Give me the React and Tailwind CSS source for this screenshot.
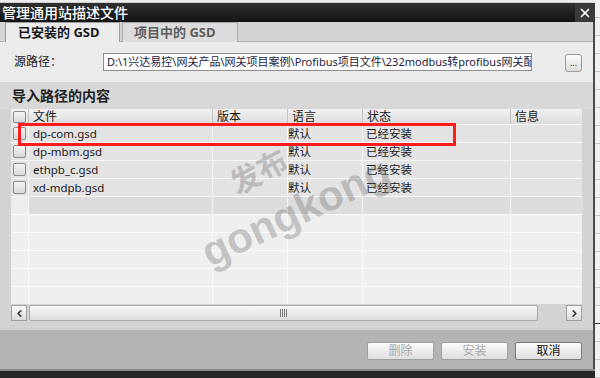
import React from "react";
import { ChevronLeft, ChevronRight, X } from "lucide-react";

const rows = [
  ["dp-com.gsd", "默认", "已经安装"],
  ["dp-mbm.gsd", "默认", "已经安装"],
  ["ethpb_c.gsd", "默认", "已经安装"],
  ["xd-mdpb.gsd", "默认", "已经安装"],
];

function Check() {
  return (
    <div className="w-[13px] h-[13px] rounded-[2px] border border-[#8c8c8c] bg-gradient-to-b from-[#f4f4f4] to-[#d8d8d8]" />
  );
}

function Btn({ children, disabled }) {
  return (
    <div
      className={
        "w-[67px] h-[18px] flex items-center justify-center rounded-[2px] border bg-gradient-to-b from-[#fbfbfb] to-[#dedede] text-[12px] leading-none " +
        (disabled ? "border-[#a0a0a0] text-[#a9a9a9]" : "border-[#7c7c7c] text-[#111]")
      }
    >
      {children}
    </div>
  );
}

export default function App() {
  const emptyRows = [0, 1, 2, 3, 4];
  return (
    <div className="relative w-[600px] h-[378px] overflow-hidden flex bg-[#ececec] font-['Noto_Sans','Noto_Sans_CJK_SC',sans-serif] text-[#1a1a1a]">
      {/* dialog */}
      <div className="w-[595px] flex flex-col shrink-0">
        <div className="h-[3px] shrink-0 bg-[#eeeeee] border-b border-[#cfcfcf]" />
        {/* title bar */}
        <div className="h-[19px] shrink-0 flex items-center justify-between bg-gradient-to-b from-[#303030] to-[#141414]">
          <span className="pl-[2px] text-white text-[14px] leading-none font-medium">管理通用站描述文件</span>
          <div className="w-[20px] h-[19px] flex items-center justify-center bg-[#3a3a3a]">
            <X size={14} strokeWidth={3} color="#ffffff" />
          </div>
        </div>
        {/* body with right border */}
        <div className="flex-1 flex flex-col border-r-2 border-[#4a4a4a]">
          {/* tabs */}
          <div className="h-[20px] shrink-0 flex bg-[#d4d4d4] pl-[5px] border-b border-[#b4b4b4]">
            <div className="w-[115px] h-[20px] flex items-center pl-[12px] bg-[#ececec] border border-b-0 border-[#9c9c9c] text-[13px] font-bold leading-none text-[#1a1a1a]">
              已安装的 GSD
            </div>
            <div className="ml-[2px] w-[116px] h-[20px] flex items-center pl-[11px] bg-[#dcdcdc] border border-b-0 border-[#a8a8a8] text-[13px] font-bold leading-none text-[#5c5c5c]">
              项目中的 GSD
            </div>
          </div>
          {/* path row */}
          <div className="h-[40px] shrink-0 bg-[#ebebeb] flex items-start pt-[11px]">
            <span className="w-[103px] pl-[14px] pt-[1px] text-[12px] leading-[16px] text-[#222]">源路径：</span>
            <div className="w-[429px] h-[18px] bg-white border border-[#8f8f8f] overflow-hidden whitespace-nowrap pl-[3px] text-[11px] leading-[16px] text-[#1c1c40]">
              D:\1兴达易控\网关产品\网关项目案例\Profibus项目文件\232modbus转profibus网关配置
            </div>
            <div className="ml-[33px] mt-[1px] w-[17px] h-[18px] rounded-[3px] border border-[#9a9a9a] bg-gradient-to-b from-[#fbfbfb] to-[#dcdcdc] flex items-end justify-center pb-[4px] text-[9px] leading-none text-[#333]">
              ...
            </div>
          </div>
          {/* section */}
          <div className="flex-1 flex flex-col bg-[#d3d3d3]">
            <div className="h-[27px] shrink-0 flex items-center pl-[12px] pt-[1px] bg-[#d8d8d8] text-[14px] font-bold leading-none text-[#222]">
              导入路径的内容
            </div>
            {/* table */}
            <div className="relative mx-[11px] h-[195px] shrink-0 bg-[#efefef] flex flex-col">
              <div className="h-[15px] shrink-0 grid grid-cols-[18px_184px_75px_75px_148px_72px] bg-gradient-to-b from-[#f2f2f2] to-[#dcdcdc] text-[12px] leading-none">
                <div className="flex items-center pl-[2px] border-r border-[#c4c4c4]">
                  <div className="w-[13px] h-[12px] rounded-[2px] border border-[#8c8c8c] bg-gradient-to-b from-[#f4f4f4] to-[#d8d8d8]" />
                </div>
                <div className="flex items-center pl-[4px] border-r border-[#c4c4c4]">文件</div>
                <div className="flex items-center pl-[4px] border-r border-[#c4c4c4]">版本</div>
                <div className="flex items-center pl-[4px] border-r border-[#c4c4c4]">语言</div>
                <div className="flex items-center pl-[4px] border-r border-[#c4c4c4]">状态</div>
                <div className="flex items-center pl-[4px]">信息</div>
              </div>
              {rows.map((r, i) => (
                <div
                  key={i}
                  className="h-[18px] shrink-0 grid grid-cols-[18px_184px_75px_75px_148px_72px] bg-[#e3e3e3] border-t border-[#f7f7f7] text-[11.5px] leading-none"
                >
                  <div className="flex items-center pl-[2px] border-r border-[#f7f7f7]">
                    <Check />
                  </div>
                  <div className="flex items-center pl-[4px] border-r border-[#f7f7f7]">{r[0]}</div>
                  <div className="border-r border-[#f7f7f7]" />
                  <div className="flex items-center pl-[0px] border-r border-[#f7f7f7]">{r[1]}</div>
                  <div className="flex items-center pl-[3px] border-r border-[#f7f7f7]">{r[2]}</div>
                  <div />
                </div>
              ))}
              <div className="h-[18px] shrink-0 grid grid-cols-[18px_184px_75px_75px_148px_72px] border-t border-[#f7f7f7]">
                <div className="bg-[#ededed] border-r border-[#f7f7f7]" />
                <div className="bg-[#dcdcdc] border-r border-[#f7f7f7]" />
                <div className="bg-[#dcdcdc] border-r border-[#f7f7f7]" />
                <div className="bg-[#dcdcdc] border-r border-[#f7f7f7]" />
                <div className="bg-[#dcdcdc] border-r border-[#f7f7f7]" />
                <div className="bg-[#dcdcdc]" />
              </div>
              {emptyRows.map((i) => (
                <div
                  key={"e" + i}
                  className="h-[18px] shrink-0 grid grid-cols-[18px_184px_75px_75px_148px_72px] border-t border-[#fafafa] bg-[#efefef]"
                >
                  <div className="border-r border-[#fafafa]" />
                  <div className="border-r border-[#fafafa]" />
                  <div className="border-r border-[#fafafa]" />
                  <div className="border-r border-[#fafafa]" />
                  <div className="border-r border-[#fafafa]" />
                  <div />
                </div>
              ))}
              {/* red highlight */}
              <div className="absolute left-[7px] top-[14px] w-[438px] h-[23px] border-[3px] border-[#ff1c1c]" />
            </div>
            {/* scrollbar */}
            <div className="mt-[1px] mx-[11px] h-[16px] shrink-0 flex">
              <div className="w-[16px] h-[16px] flex items-center justify-center border border-[#a0a0a0] bg-gradient-to-b from-[#fafafa] to-[#dcdcdc]">
                <ChevronLeft size={11} strokeWidth={3.5} color="#333" />
              </div>
              <div className="ml-[2px] w-[509px] h-[16px] flex items-center justify-center rounded-[2px] border border-[#a8a8a8] bg-gradient-to-b from-[#f7f7f7] to-[#dcdcdc]">
                <div className="flex gap-[1px]">
                  <div className="w-[1px] h-[8px] bg-[#777]" />
                  <div className="w-[1px] h-[8px] bg-[#777]" />
                  <div className="w-[1px] h-[8px] bg-[#777]" />
                  <div className="w-[1px] h-[8px] bg-[#777]" />
                </div>
              </div>
              <div className="ml-[28px] w-[16px] h-[16px] flex items-center justify-center border border-[#a0a0a0] bg-gradient-to-b from-[#fafafa] to-[#dcdcdc]">
                <ChevronRight size={11} strokeWidth={3.5} color="#333" />
              </div>
            </div>
            <div className="h-[8px] shrink-0" />
          </div>
          {/* buttons */}
          <div className="h-[39px] shrink-0 bg-[#b4b4b4] flex justify-end items-start pt-[12px] pr-[11px] gap-[7px]">
            <Btn disabled>删除</Btn>
            <Btn disabled>安装</Btn>
            <Btn>取消</Btn>
          </div>
        </div>
        <div className="h-[2px] shrink-0 bg-[#8a8a8a]" />
        <div className="h-[7px] shrink-0 bg-[#262626]" />
      </div>
      {/* background strip at right */}
      <div className="flex-1 flex flex-col bg-[#f0f0f0]">
        {Array.from({ length: 21 }).map((_, i) => (
          <div key={i} className={"h-[18px] shrink-0 border-b " + (i === 17 ? "border-[#333]" : "border-[#c8c8c8]")} />
        ))}
      </div>
      {/* watermark */}
      <div className="absolute left-[258px] top-[170px] -translate-x-1/2 -translate-y-1/2 rotate-[-28deg] text-[30px] font-bold leading-none text-[rgba(110,110,110,0.35)] font-['Noto_Sans_CJK_SC',sans-serif] pointer-events-none">
        发布
      </div>
      <div className="absolute left-[300px] top-[210px] -translate-x-1/2 -translate-y-1/2 rotate-[-25deg] text-[42px] font-bold leading-none text-[rgba(110,110,110,0.35)] font-['Liberation_Sans',sans-serif] pointer-events-none whitespace-nowrap">
        gongkong<span className="text-[12px] align-top">®</span>
      </div>
    </div>
  );
}
